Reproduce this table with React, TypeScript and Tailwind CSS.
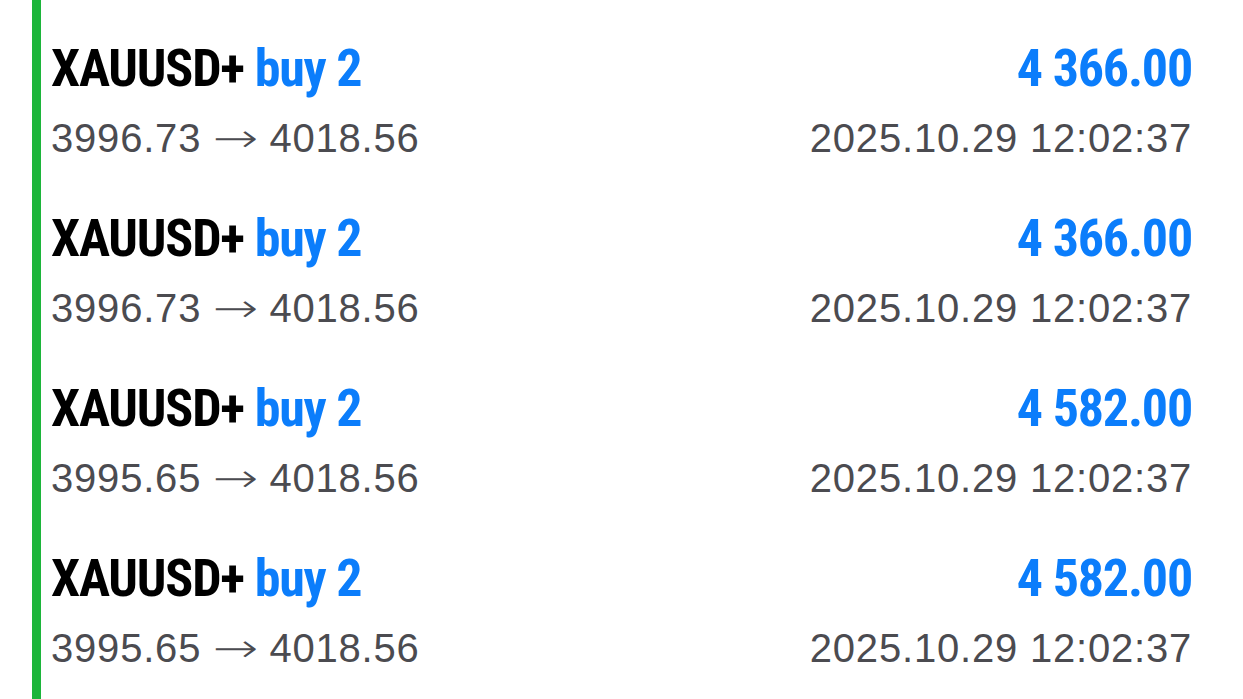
const trades = [
  { open: '3996.73', close: '4018.56', profit: '4 366.00', time: '2025.10.29 12:02:37' },
  { open: '3996.73', close: '4018.56', profit: '4 366.00', time: '2025.10.29 12:02:37' },
  { open: '3995.65', close: '4018.56', profit: '4 582.00', time: '2025.10.29 12:02:37' },
  { open: '3995.65', close: '4018.56', profit: '4 582.00', time: '2025.10.29 12:02:37' },
];

// Roboto is variable here, so font-stretch gives the condensed cut
const condensed = { fontStretch: 'condensed' } as const;

export default function App() {
  return (
    <div className="h-[699px] w-[1243px] overflow-hidden bg-white pl-8 pr-[51px]">
      <div className="flex h-full">
        <div className="w-[9px] shrink-0 bg-[#1cb53a]" />
        <div className="flex-1 pl-[10px] pt-[43px]">
          {trades.map((t, i) => (
            <div key={i} className="flex h-[170px] flex-col">
              <div
                className="flex h-[52px] items-center justify-between font-['Roboto',sans-serif] text-[52px] font-bold leading-[52px] tracking-[-1.2px]"
                style={condensed}
              >
                <span className="text-black">
                  XAUUSD+ <span className="text-[#0b7dfb]">buy 2</span>
                </span>
                <span className="text-[#0b7dfb]">{t.profit}</span>
              </div>
              <div className="mt-[23px] flex h-[40px] items-center justify-between font-['Liberation_Sans',sans-serif] text-[40px] leading-[40px] tracking-[0.8px] text-[#4b4b50]">
                <span>
                  {t.open}{' '}
                  <span className="mr-[10px] inline-block origin-left scale-x-[1.36] font-['DejaVu_Sans',sans-serif] font-light">→</span>{' '}
                  {t.close}
                </span>
                <span>{t.time}</span>
              </div>
            </div>
          ))}
        </div>
      </div>
    </div>
  );
}
